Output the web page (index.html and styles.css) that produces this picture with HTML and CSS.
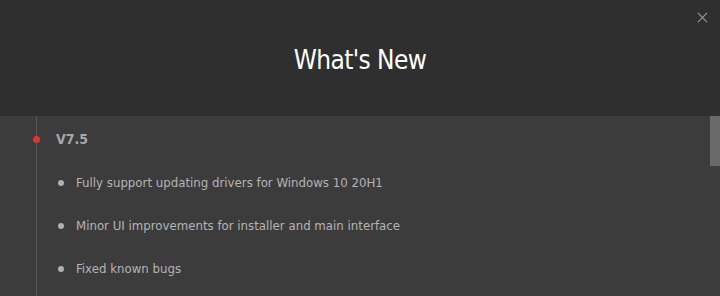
FILE: index.html
```html
<!DOCTYPE html>
<html lang="en">
<head>
  <meta charset="UTF-8">
  <title>What's New</title>
  <link rel="stylesheet" href="styles.css">
</head>
<body>
  <div class="dialog">
    <header class="dialog-header">
      <h1>What's New</h1>
      <button class="close-btn" aria-label="Close">
        <svg viewBox="0 0 12 12">
          <path d="M1 1L11 11M11 1L1 11"/>
        </svg>
      </button>
    </header>

    <div class="dialog-body">
      <div class="timeline">
        <div class="release">
          <div class="version">V7.5</div>
          <ul class="changes">
            <li>Fully support updating drivers for Windows 10 20H1</li>
            <li>Minor UI improvements for installer and main interface</li>
            <li>Fixed known bugs</li>
          </ul>
        </div>
      </div>
      <div class="scrollbar"><div class="thumb"></div></div>
    </div>
  </div>
</body>
</html>
```

FILE: styles.css
```css
* {
  margin: 0;
  padding: 0;
  box-sizing: border-box;
}

body {
  font-family: "DejaVu Sans Condensed", "DejaVu Sans", sans-serif;
  background: #3c3c3c;
  width: 720px;
  height: 296px;
  overflow: hidden;
}

.dialog {
  display: flex;
  flex-direction: column;
  height: 296px;
}

.dialog-header {
  position: relative;
  height: 116px;
  background: #2f2f2f;
  display: flex;
  align-items: center;
  justify-content: center;
}

.dialog-header h1 {
  font-weight: normal;
  font-size: 26px;
  color: #ffffff;
  letter-spacing: -0.6px;
  padding-top: 4px;
}

.close-btn {
  position: absolute;
  top: 12px;
  right: 12px;
  width: 11px;
  height: 11px;
  background: none;
  border: none;
  cursor: pointer;
}

.close-btn svg {
  display: block;
  width: 11px;
  height: 11px;
  stroke: #9a9a9a;
  stroke-width: 1.2;
  fill: none;
}

.dialog-body {
  flex: 1;
  display: flex;
}

.timeline {
  flex: 1;
  margin-left: 36px;
  border-left: 1px solid #555555;
}

.release {
  padding: 15px 0 0 19px;
}

.version {
  position: relative;
  font-size: 14px;
  font-weight: bold;
  color: #a8a8a8;
  line-height: 16px;
}

.version::before {
  content: '';
  position: absolute;
  left: -23px;
  top: 5px;
  width: 7px;
  height: 7px;
  border-radius: 50%;
  background: #e8312f;
}

.changes {
  list-style: none;
  margin-top: 14px;
}

.changes li {
  display: flex;
  align-items: center;
  height: 43px;
  font-size: 13.1px;
  color: #b4b4b4;
}

.changes li::before {
  content: '';
  width: 6px;
  height: 6px;
  border-radius: 50%;
  background: #b0b0b0;
  margin: 0 12px 0 2px;
}

.scrollbar {
  width: 10px;
  background: #3c3c3c;
}

.thumb {
  height: 50px;
  background: #6a6a6a;
}
```
